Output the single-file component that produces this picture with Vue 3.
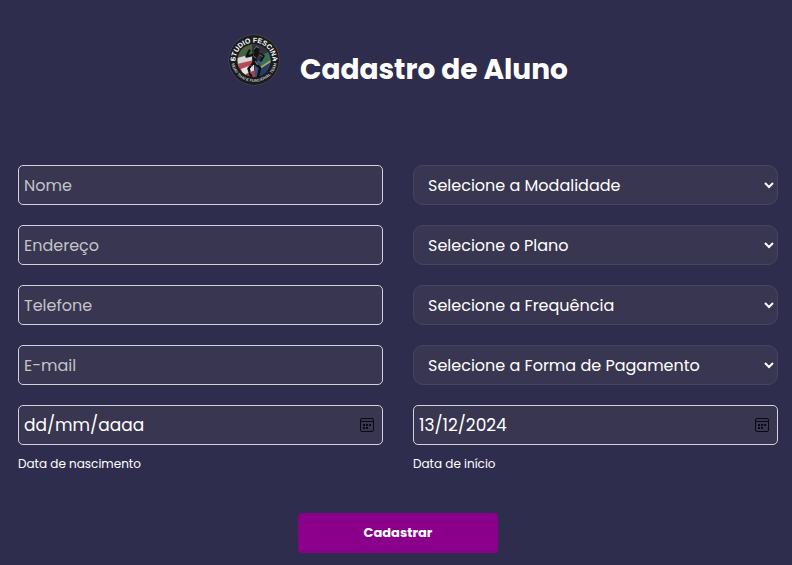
<script setup>
import { reactive } from 'vue'

const form = reactive({
  nome: '',
  endereco: '',
  telefone: '',
  email: '',
  modalidade: '',
  plano: '',
  frequencia: '',
  pagamento: '',
  nascimento: '',
  inicio: '13/12/2024',
})

const rows = [
  {
    input: { id: 'nome', label: 'Nome', type: 'text' },
    select: { id: 'modalidade', label: 'Selecione a Modalidade' },
  },
  {
    input: { id: 'endereco', label: 'Endereço', type: 'text' },
    select: { id: 'plano', label: 'Selecione o Plano' },
  },
  {
    input: { id: 'telefone', label: 'Telefone', type: 'tel' },
    select: { id: 'frequencia', label: 'Selecione a Frequência' },
  },
  {
    input: { id: 'email', label: 'E-mail', type: 'email' },
    select: { id: 'pagamento', label: 'Selecione a Forma de Pagamento' },
  },
]

const dates = [
  { id: 'nascimento', label: 'Data de nascimento' },
  { id: 'inicio', label: 'Data de início' },
]
</script>

<template>
  <main class="page">
    <header class="header">
      <svg class="logo" viewBox="0 0 104 104" role="img" aria-label="Studio Fescina">
        <defs>
          <path id="arc-top" d="M17 66a37 37 0 1 1 70 0" />
          <path id="arc-bottom" d="M6 50a46 46 0 0 0 92 0" />
          <clipPath id="disc"><circle cx="52" cy="53" r="33" /></clipPath>
        </defs>
        <circle cx="52" cy="52" r="51" fill="#55545a" />
        <circle cx="52" cy="52" r="50" fill="#1b1c20" />
        <g clip-path="url(#disc)">
          <path fill="#35323d" d="M18 18h68v68H18z" />
          <path fill="#46643f" d="M18 32l30-12v22L18 54z" />
          <path fill="#d7d8da" d="M18 48l30-8v14L18 66z" />
          <path fill="#b34b59" d="M18 60l34-8v10L24 78z" />
          <path fill="#e5e4e4" d="M26 70l26-10v14l-20 12z" />
          <path fill="#a64050" d="M36 80l18-8v16H36z" />
          <path fill="#35517e" d="M54 56l32-12v42H54z" />
          <path fill="#3b6e57" d="M68 42l20-10v26L64 70z" />
          <path fill="#b4a65c" d="M64 66l24-16v5L64 72z" />
          <path fill="#253b69" d="M58 74l28-18-14 30h-8z" />
        </g>
        <g fill="none" stroke="#101214" stroke-linecap="round" stroke-linejoin="round">
          <path stroke-width="8" d="M56 40l-4 18" />
          <path stroke-width="5" d="M57 38l14 6-5 9M49 42l-12 3 6-12M50 59l-9 10 5 15M54 59l10 9-4 18" />
        </g>
        <circle cx="57" cy="31" r="6" fill="#101214" />
        <path fill="none" stroke="#9a9a9c" stroke-width="1.5" d="M52 31l4-6 6 3M51 43l5 6M45 63l5 3M62 41l7 4M54 54l5 8M44 74l3 6" />
        <text class="logo-name"><textPath href="#arc-top" startOffset="50%">STUDIO FESCINA</textPath></text>
        <text class="logo-tag"><textPath href="#arc-bottom" startOffset="50%">MUAY THAI E FUNCIONAL TEAM</textPath></text>
        <circle cx="10" cy="52" r="2" fill="#f0f0f0" />
        <circle cx="94" cy="52" r="2" fill="#f0f0f0" />
      </svg>
      <h1 class="title">Cadastro de Aluno</h1>
    </header>

    <form class="form" @submit.prevent>
      <div class="grid">
        <template v-for="row in rows" :key="row.input.id">
          <input
            :id="row.input.id"
            v-model="form[row.input.id]"
            class="field"
            :type="row.input.type"
            :placeholder="row.input.label"
            :aria-label="row.input.label"
          />
          <select
            :id="row.select.id"
            v-model="form[row.select.id]"
            class="select"
            :aria-label="row.select.label"
          >
            <option value="">{{ row.select.label }}</option>
          </select>
        </template>

        <div v-for="date in dates" :key="date.id" class="date">
          <div class="field date-box">
            <input
              :id="date.id"
              v-model="form[date.id]"
              class="date-input"
              type="text"
              inputmode="numeric"
              placeholder="dd/mm/aaaa"
            />
            <button class="picker" type="button" :aria-label="'Abrir calendário: ' + date.label">
              <svg class="calendar" viewBox="0 0 14 14" aria-hidden="true">
                <rect x=".5" y=".5" width="13" height="13" rx="1.5" fill="none" stroke="currentColor" />
                <path d="M1 3.5h12" stroke="currentColor" />
                <path fill="currentColor" d="M3 6h2v2H3zM6 6h2v2H6zM9 6h2v2H9zM3 9h2v2H3zM6 9h2v2H6z" />
              </svg>
            </button>
          </div>
          <label class="caption" :for="date.id">{{ date.label }}</label>
        </div>
      </div>

      <button class="submit" type="submit">Cadastrar</button>
    </form>
  </main>
</template>

<style>
body {
  margin: 0;
  background: #2f2d4d;
}
</style>

<style scoped>
.page {
  box-sizing: border-box;
  min-height: 100vh;
  padding: 34px 14px 12px 18px;
  background: #2f2d4d;
  color: #fff;
  font-family: Poppins, Inter, sans-serif;
}

.header {
  display: flex;
  justify-content: center;
  gap: 20px;
}

.logo {
  width: 52px;
  height: 52px;
}

.logo-name,
.logo-tag {
  fill: #fff;
  font-family: "Liberation Sans Narrow", "Liberation Sans", sans-serif;
  font-weight: 700;
  text-anchor: middle;
}

.logo-name {
  font-size: 14px;
}

.logo-tag {
  fill: #c9c9cb;
  font-size: 8px;
}

.title {
  margin: 15px 0 0;
  font-size: 28px;
  line-height: 42px;
  font-weight: 700;
}

.form {
  display: flex;
  flex-direction: column;
  align-items: center;
  gap: 40px;
  margin-top: 74px;
}

.grid {
  display: grid;
  grid-template-columns: 1fr 1fr;
  gap: 20px 30px;
  width: 100%;
}

.field,
.select {
  box-sizing: border-box;
  width: 100%;
  min-width: 0;
  height: 40px;
  background-color: #383650;
  color: #fff;
  font-family: inherit;
  font-size: 16px;
}

.field {
  padding: 0 5px;
  border: 1px solid #d3d2dc;
  border-radius: 5px;
}

.field::placeholder {
  color: #c4c3ca;
  opacity: 1;
}

.select {
  padding: 0 0 0 10px;
  border: 1px solid #474564;
  border-radius: 10px;
}

.date-box {
  display: flex;
  align-items: center;
  padding-right: 8px;
  font-size: 17px;
}

.date-input {
  flex: 1;
  min-width: 0;
  padding: 0;
  border: 0;
  background: transparent;
  color: inherit;
  font: inherit;
}

.date-input::placeholder {
  color: #fff;
  opacity: 1;
}

.picker {
  display: flex;
  padding: 0;
  border: 0;
  background: transparent;
  color: #0b0a12;
  cursor: pointer;
}

.calendar {
  width: 14px;
  height: 14px;
}

.caption {
  display: block;
  margin-top: 10px;
  font-size: 12px;
  line-height: 18px;
}

.submit {
  width: 200px;
  height: 40px;
  border: 0;
  border-radius: 4px;
  background: #8b008b;
  color: #fff;
  font-family: inherit;
  font-size: 13px;
  font-weight: 700;
  cursor: pointer;
}
</style>
